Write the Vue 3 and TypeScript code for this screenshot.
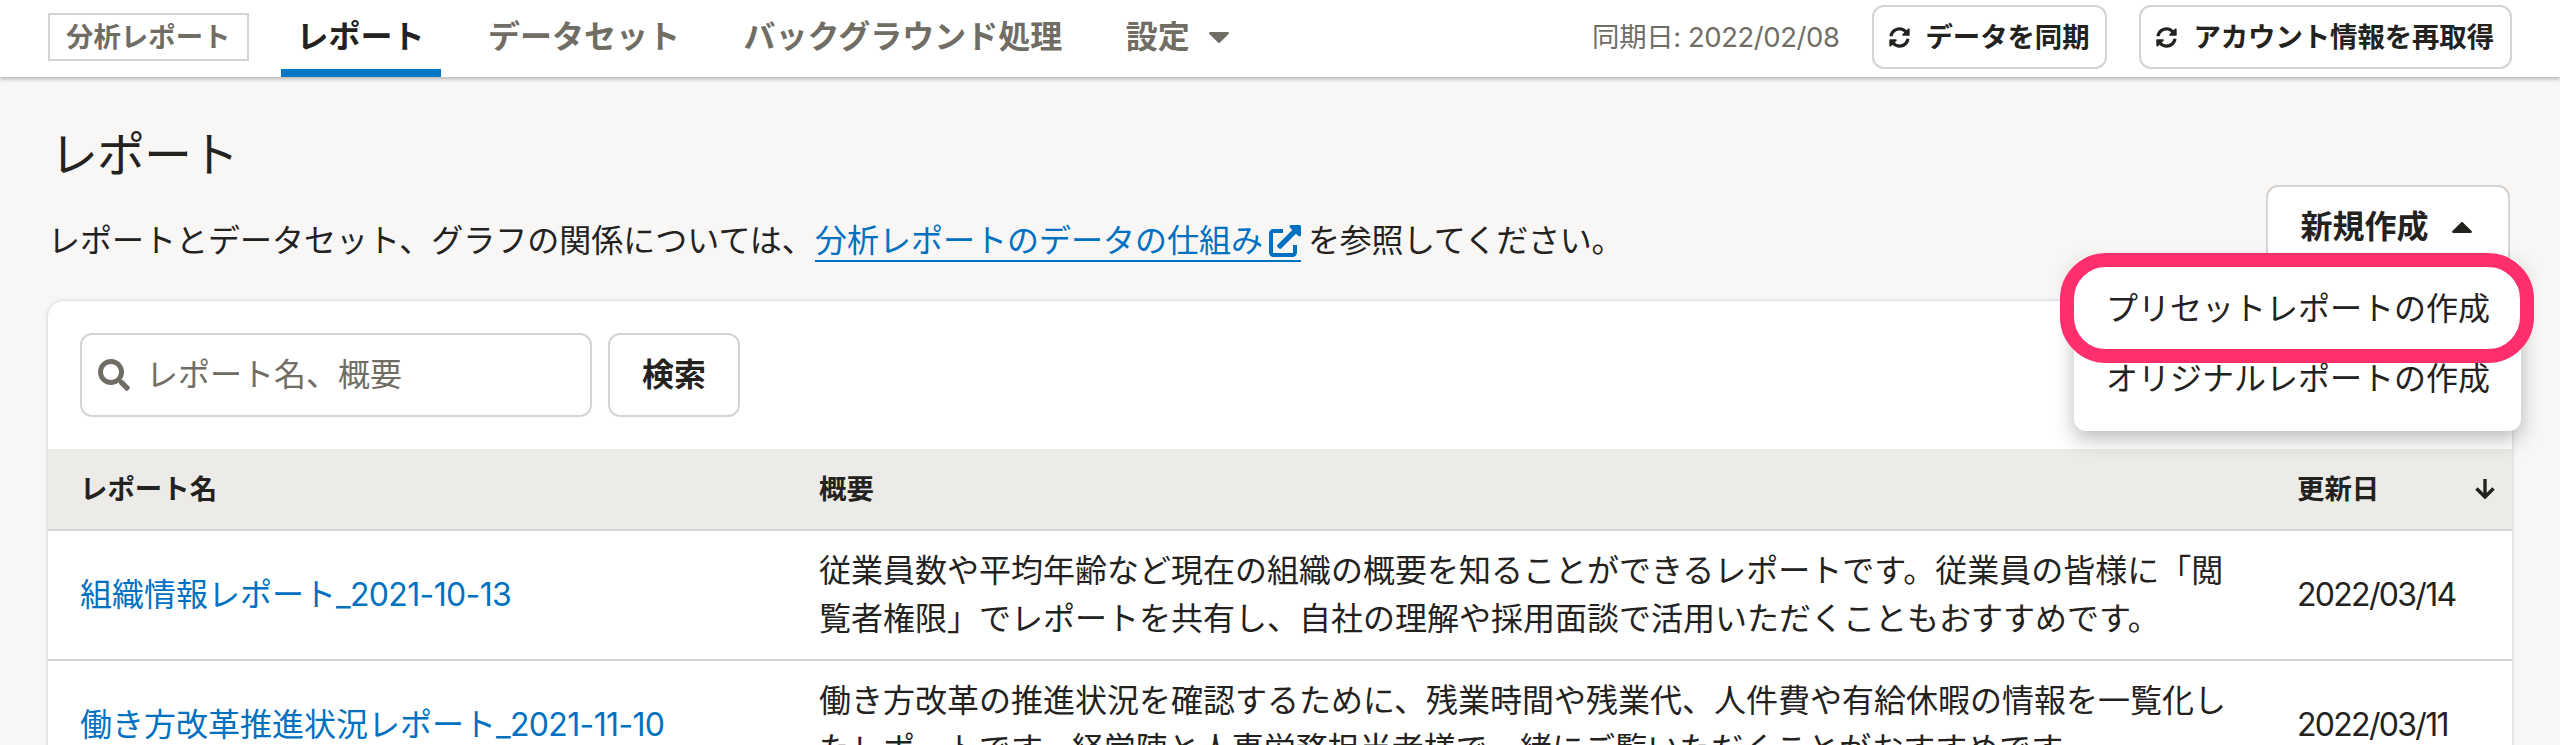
<script setup lang="ts">
interface Tab {
  label: string
  active?: boolean
  menu?: boolean
}

interface Report {
  name: string
  suffix: string
  summary: string[]
  updated: string
}

const tabs: Tab[] = [
  { label: 'レポート', active: true },
  { label: 'データセット' },
  { label: 'バックグラウンド処理' },
  { label: '設定', menu: true },
]

const syncActions: string[] = ['データを同期', 'アカウント情報を再取得']

const createOptions: string[] = ['プリセットレポートの作成', 'オリジナルレポートの作成']

const reports: Report[] = [
  {
    name: '組織情報レポート',
    suffix: '_2021-10-13',
    summary: [
      '従業員数や平均年齢など現在の組織の概要を知ることができるレポートです。従業員の皆様に「閲',
      '覧者権限」でレポートを共有し、自社の理解や採用面談で活用いただくこともおすすめです。',
    ],
    updated: '2022/03/14',
  },
  {
    name: '働き方改革推進状況レポート',
    suffix: '_2021-11-10',
    summary: [
      '働き方改革の推進状況を確認するために、残業時間や残業代、人件費や有給休暇の情報を一覧化し',
      'たレポートです。経営陣と人事労務担当者様で一緒にご覧いただくことがおすすめです。',
    ],
    updated: '2022/03/11',
  },
]
</script>

<template>
  <div class="page">
    <header class="header">
      <span class="app-name">分析レポート</span>
      <nav class="tabs">
        <a v-for="tab in tabs" :key="tab.label" class="tab" :class="{ active: tab.active }">
          {{ tab.label }}
          <svg v-if="tab.menu" class="caret" viewBox="0 0 20 11"><path d="M1.200 0h17.600c1 0 1.500 1.200.8 1.900L11 10.500c-.6.600-1.400.600-2 0L.4 1.900C-.300 1.200.2 0 1.200 0z" /></svg>
        </a>
      </nav>
      <div class="sync">
        <span class="sync-date">同期日: 2022/02/08</span>
        <button v-for="label in syncActions" :key="label" class="btn small">
          <svg class="sync-icon" viewBox="0 0 512 512"><path d="M370.720 133.280C339.458 104.008 298.888 87.962 255.848 88c-77.458.068-144.328 53.178-162.791 126.850-1.344 5.363-6.122 9.150-11.651 9.150H24.103c-7.498 0-13.194-6.807-11.807-14.176C33.933 94.924 134.813 8 256 8c66.448 0 126.791 26.136 171.315 68.685L463.030 40.970C478.149 25.851 504 36.559 504 57.941V192c0 13.255-10.745 24-24 24H345.941c-21.382 0-32.090-25.851-16.971-40.971l41.750-41.749zM32 296h134.059c21.382 0 32.090 25.851 16.971 40.971l-41.750 41.750c31.262 29.273 71.835 45.319 114.876 45.280 77.418-.070 144.315-53.144 162.787-126.849 1.344-5.363 6.122-9.150 11.651-9.150h57.304c7.498 0 13.194 6.807 11.807 14.176C478.067 417.076 377.187 504 256 504c-66.448 0-126.791-26.136-171.315-68.685L48.970 471.030C33.851 486.149 8 475.441 8 454.059V320c0-13.255 10.745-24 24-24z" /></svg>
          {{ label }}
        </button>
      </div>
    </header>

    <main class="main">
      <div class="heading">
        <div>
          <h1>レポート</h1>
          <p class="intro">
            <span class="intro-start">レポートとデータセット、グラフの関係については、</span><a class="help-link">分析レポートのデータの仕組み<svg class="external" viewBox="0 0 32 32"><path d="M14 6H4.500A2.500 2.500 0 0 0 2 8.500v19A2.500 2.500 0 0 0 4.500 30h19a2.500 2.500 0 0 0 2.500-2.500V20" fill="none" stroke="currentColor" stroke-width="4" /><path d="M22 0h8.500c.8 0 1.500.700 1.500 1.500V10c0 1.300-1.600 2-2.600 1.100L27 8.700 12.200 23.500c-.6.600-1.500.600-2.100 0l-1.600-1.600c-.6-.6-.6-1.500 0-2.100L23.300 5l-2.400-2.400C20 1.600 20.700 0 22 0z" fill="currentColor" /></svg></a><span class="intro-end">を参照してください。</span>
          </p>
        </div>
        <div class="create">
          <button class="btn create-btn">
            新規作成
            <svg class="caret up" viewBox="0 0 20 11"><path d="M1.200 0h17.600c1 0 1.500 1.200.8 1.900L11 10.500c-.6.600-1.400.600-2 0L.4 1.900C-.300 1.200.2 0 1.200 0z" /></svg>
          </button>
          <div class="menu">
            <a v-for="option in createOptions" :key="option" class="menu-item">{{ option }}</a>
            <div class="highlight"></div>
          </div>
        </div>
      </div>

      <section class="card">
        <div class="toolbar">
          <div class="search">
            <svg class="search-icon" viewBox="0 0 512 512"><path d="M505 442.700L405.300 343c-4.500-4.500-10.600-7-17-7H372c27.600-35.300 44-79.700 44-128C416 93.100 322.900 0 208 0S0 93.100 0 208s93.100 208 208 208c48.300 0 92.700-16.400 128-44v16.300c0 6.400 2.500 12.500 7 17l99.700 99.700c9.400 9.400 24.600 9.400 33.900 0l28.300-28.300c9.400-9.400 9.400-24.600.1-34zM208 336c-70.700 0-128-57.200-128-128 0-70.700 57.200-128 128-128 70.700 0 128 57.200 128 128 0 70.700-57.200 128-128 128z" /></svg>
            <span>レポート名、概要</span>
          </div>
          <button class="btn search-btn">検索</button>
        </div>
        <div class="row head">
          <div>レポート名</div>
          <div>概要</div>
          <div class="sortable">
            更新日
            <svg class="sort" viewBox="0 0 20 20"><path d="M10 0v18M1.500 9.500L10 18l8.500-8.500" /></svg>
          </div>
        </div>
        <div v-for="report in reports" :key="report.name" class="row">
          <div><a class="report-link">{{ report.name }}<span class="suffix">{{ report.suffix }}</span></a></div>
          <div>
            <div v-for="line in report.summary" :key="line">{{ line }}</div>
          </div>
          <div class="date">{{ report.updated }}</div>
        </div>
      </section>
    </main>
  </div>
</template>

<style>
body {
  margin: 0;
  overflow: hidden;
}
</style>

<style scoped>
.page {
  box-sizing: border-box;
  height: 745px;
  overflow: hidden;
  background: #f8f7f6;
  color: #23221e;
  font-family: Inter, 'Noto Sans CJK JP', sans-serif;
  font-size: 32px;
  line-height: 48px;
  white-space: nowrap;
}

.page * {
  box-sizing: border-box;
}

svg {
  display: block;
  flex: none;
  fill: currentColor;
}

.header {
  position: relative;
  display: flex;
  align-items: center;
  height: 77px;
  padding: 0 48px;
  background: #fff;
  box-shadow: 0 2px 4px rgba(30, 30, 30, 0.3);
}

.app-name {
  height: 48px;
  margin-bottom: 3px;
  padding: 0 16px;
  border: 2px solid #d6d3d0;
  color: #706d65;
  font-size: 27.43px;
  font-weight: 700;
  line-height: 44px;
}

.tabs {
  display: flex;
  gap: 31.5px;
  height: 77px;
  margin-left: 32px;
}

.tab {
  display: flex;
  align-items: center;
  gap: 19px;
  padding: 0 16px 3px;
  color: #706d65;
  font-weight: 700;
}

.tab.active {
  padding-top: 5px;
  padding-bottom: 0;
  border-bottom: 8px solid #0077c7;
  color: #23221e;
}

.caret {
  width: 20px;
  height: 11px;
}

.caret.up {
  transform: rotate(180deg);
}

.sync {
  display: flex;
  align-items: center;
  gap: 32px;
  margin-left: auto;
  margin-bottom: 3px;
}

.sync-date {
  color: #706d65;
  font-size: 27.43px;
  letter-spacing: -0.4px;
}

.btn {
  display: flex;
  align-items: center;
  justify-content: center;
  padding: 0;
  border: 2px solid #d6d3d0;
  border-radius: 12px;
  background: #fff;
  color: #23221e;
  font: inherit;
  font-weight: 700;
}

.btn.small {
  gap: 16px;
  height: 64px;
  padding: 0 16px 0 15px;
  font-size: 27.43px;
  letter-spacing: -0.1px;
}

.sync-icon {
  width: 21px;
  height: 21px;
}

.main {
  padding: 0 48px;
}

.heading {
  display: flex;
  justify-content: space-between;
  height: 224px;
}

h1 {
  margin: 42px 0 0;
  padding-left: 2px;
  font-size: 48px;
  font-weight: 400;
  letter-spacing: -1px;
  line-height: 72px;
}

.intro {
  display: flex;
  margin: 26px 0 0;
}

.intro-start {
  width: 767px;
}

.help-link {
  display: flex;
  align-items: flex-start;
  gap: 6px;
  height: 45px;
  border-bottom: 2px solid #0071c1;
  color: #0071c1;
}

.external {
  width: 32px;
  height: 32px;
  margin-top: 8px;
}

.intro-end {
  margin-left: 7px;
  letter-spacing: -0.3px;
}

.create {
  position: relative;
  margin: 108px 2px 0 0;
}

.create-btn {
  gap: 23px;
  width: 244px;
  height: 84px;
  padding-right: 4px;
}

.menu {
  position: absolute;
  z-index: 2;
  top: 73px;
  right: -11px;
  width: 447px;
  height: 173px;
  padding: 16px 0;
  border-radius: 12px;
  background: #fff;
  box-shadow: 0 8px 20px rgba(30, 30, 30, 0.3);
}

.menu-item {
  display: block;
  padding: 11px 32px;
}

.highlight {
  position: absolute;
  top: -5px;
  left: -14px;
  width: 474px;
  height: 110px;
  border: 14px solid #ff2f6d;
  border-radius: 46px;
}

.card {
  overflow: hidden;
  height: 500px;
  border-radius: 16px 16px 0 0;
  background: #fff;
  box-shadow: 0 0 4px rgba(30, 30, 30, 0.2);
}

.toolbar {
  display: flex;
  gap: 16px;
  height: 148px;
  padding: 32px;
}

.search {
  display: flex;
  align-items: center;
  gap: 16px;
  width: 512px;
  height: 84px;
  padding: 0 16px;
  border: 2px solid #d6d3d0;
  border-radius: 12px;
  color: #706d65;
}

.search-icon {
  width: 32px;
  height: 32px;
}

.search-btn {
  width: 132px;
  height: 84px;
}

.row {
  display: grid;
  grid-template-columns: 739px 1478px 1fr;
  align-items: center;
  height: 130px;
  padding-left: 32px;
  border-bottom: 2px solid #d6d3d0;
}

.row.head {
  height: 82px;
  background: #ecebe7;
  font-size: 27.43px;
  font-weight: 700;
}

.sortable {
  display: flex;
  align-items: center;
  justify-content: space-between;
  padding-right: 17px;
}

.sort {
  width: 20px;
  height: 20px;
  fill: none;
  stroke: currentColor;
  stroke-width: 3.4;
}

.report-link {
  color: #0071c1;
}

.suffix {
  letter-spacing: -0.65px;
}

.date {
  letter-spacing: -1.7px;
}
</style>
